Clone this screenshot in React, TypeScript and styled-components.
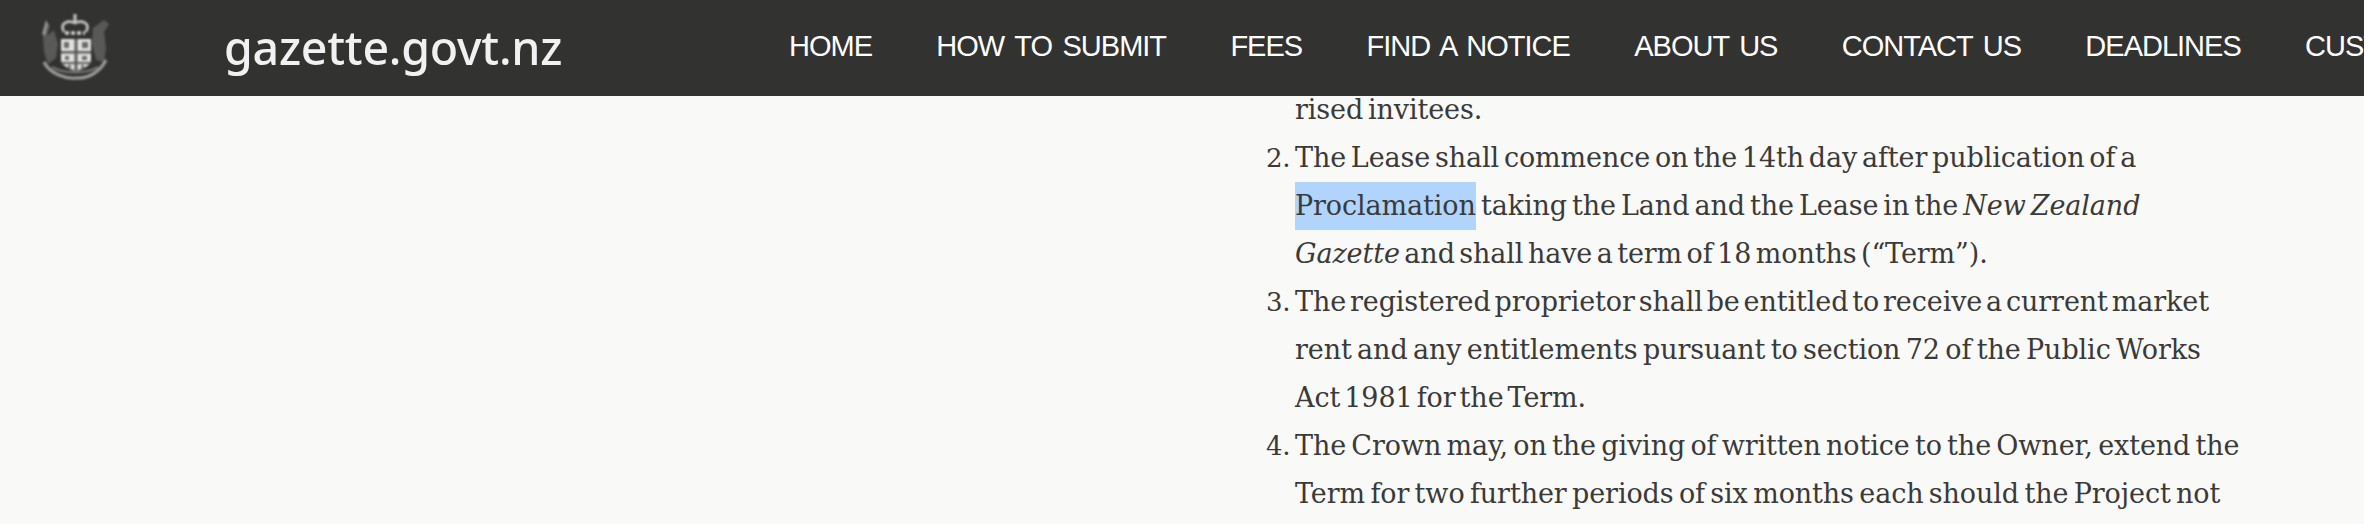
import React from "react";
import styled, { createGlobalStyle } from "styled-components";

const Global = createGlobalStyle`
  html, body { margin: 0; padding: 0; height: 524px; overflow: hidden; background: #f9f9f7; }
`;

const Page = styled.div`
  width: 2364px;
  height: 524px;
  overflow: hidden;
  background: #f9f9f7;
`;

const Header = styled.header`
  position: relative;
  z-index: 1;
  display: flex;
  align-items: center;
  height: 96px;
  background: #323231;
  overflow: hidden;
  white-space: nowrap;
`;

const Crest = styled.svg`
  flex: none;
  width: 72px;
  height: 68px;
  margin: 0 0 0 38px;
  filter: blur(1.2px);
`;

const Brand = styled.div`
  flex: none;
  width: 565px;
  margin-left: 114px;
  padding-bottom: 2px;
  font-family: "Noto Sans", sans-serif;
  font-size: 46.5px;
  font-weight: 500;
  letter-spacing: -0.25px;
  line-height: 94px;
  color: #f1f1f1;
  filter: blur(0.6px);
`;

const Nav = styled.nav`
  display: flex;
  gap: 64.3px;
  flex: none;
`;

const NavLink = styled.a`
  font-family: "Liberation Sans", Arial, sans-serif;
  font-size: 29px;
  letter-spacing: -1px;
  word-spacing: 3.5px;
  color: #ffffff;
  text-decoration: none;
  position: relative;
  top: -2px;
`;

const Clause = styled.ol`
  margin: -10px 0 0 1295px;
  padding: 0;
  font-family: "DejaVu Serif", serif;
  font-size: 27px;
  line-height: 48px;
  letter-spacing: -0.1px;
  word-spacing: -3.7px;
  color: #3a3a39;
`;

const Item = styled.li`
  padding: 0;
  list-style-position: outside;
  &::marker { font-size: 26px; }
`;

const Continued = styled.div`
  list-style: none;
`;

const Line = styled.span<{ $words?: number }>`
  display: block;
  white-space: nowrap;
  word-spacing: ${(p) => p.$words ?? -3.7}px;
`;

const Selected = styled.span`
  background: #b0d4fc;
  display: inline-block;
`;

const Emphasis = styled.em`
  font-style: italic;
`;

const navItems = ["HOME", "HOW TO SUBMIT", "FEES", "FIND A NOTICE", "ABOUT US", "CONTACT US", "DEADLINES", "CUSTOMER"];

export default function App() {
  return (
    <Page>
      <Global />
      <Header>
        <Crest viewBox="0 0 72 68" aria-label="New Zealand coat of arms">
          {/* supporters */}
          <path d="M5 22 L8 7 L12 12 L9 22 L16 16 L20 30 L18 44 L10 50 L6 38 Z" fill="#7a7a78" opacity="0.55" />
          <path d="M4 20 L8 6 L10 10 L7 22 Z" fill="#a8a8a6" opacity="0.8" />
          <path d="M55 14 L66 6 L71 10 L66 18 L68 34 L66 48 L58 46 L54 30 Z" fill="#7a7a78" opacity="0.55" />
          {/* crown */}
          <path d="M37 0 V8" stroke="#c8c8c6" strokeWidth="3" />
          <path d="M26 18 C21 8 31 6 37 9 C43 6 53 8 48 18" fill="none" stroke="#c8c8c6" strokeWidth="2.6" />
          <path d="M27 19 H47" stroke="#d4d4d2" strokeWidth="3.5" strokeDasharray="4 2" />
          {/* shield */}
          <path d="M23 25 H53 V46 C53 52 44 55 38 57 C32 55 23 52 23 46 Z" fill="#e2e2e0" />
          <path d="M36.5 25 H39.5 V57 H36.5 Z M23 37 H53 V39.5 H23 Z M23 48 H53 V50 H23 Z" fill="#5a5a59" />
          <path d="M26 28 h5 v6 h-5 Z M44 28 h6 v6 h-6 Z M27 42 h4 v4 h-4 Z M44 42 h5 v4 h-5 Z M30 51 h3 v3 h-3 Z M43 51 h3 v3 h-3 Z" fill="#6a6a69" />
          {/* fern banner */}
          <path d="M6 48 C12 60 28 65 38 64 C50 65 62 58 68 46" fill="none" stroke="#a0a09e" strokeWidth="3" />
          <path d="M14 53 C24 60 50 60 60 53" fill="none" stroke="#848482" strokeWidth="2" />
        </Crest>
        <Brand>gazette.govt.nz</Brand>
        <Nav>
          {navItems.map((label) => (
            <NavLink key={label}>{label}</NavLink>
          ))}
        </Nav>
      </Header>
      <Clause>
        <Continued>
          <Line>rised invitees.</Line>
        </Continued>
        <Item value={2}>
          <Line>The Lease shall commence on the 14th day after publication of a</Line>
          <Line $words={-3.4}>
            <Selected>Proclamation</Selected> taking the Land and the Lease in the <Emphasis>New Zealand</Emphasis>
          </Line>
          <Line $words={-4}>
            <Emphasis>Gazette</Emphasis> and shall have a term of 18 months (“Term”).
          </Line>
        </Item>
        <Item value={3}>
          <Line $words={-4.6}>The registered proprietor shall be entitled to receive a current market</Line>
          <Line $words={-3.1}>rent and any entitlements pursuant to section 72 of the Public Works</Line>
          <Line $words={-4.4}>Act 1981 for the Term.</Line>
        </Item>
        <Item value={4}>
          <Line $words={-3.2}>The Crown may, on the giving of written notice to the Owner, extend the</Line>
          <Line $words={-3.1}>Term for two further periods of six months each should the Project not</Line>
        </Item>
      </Clause>
    </Page>
  );
}
